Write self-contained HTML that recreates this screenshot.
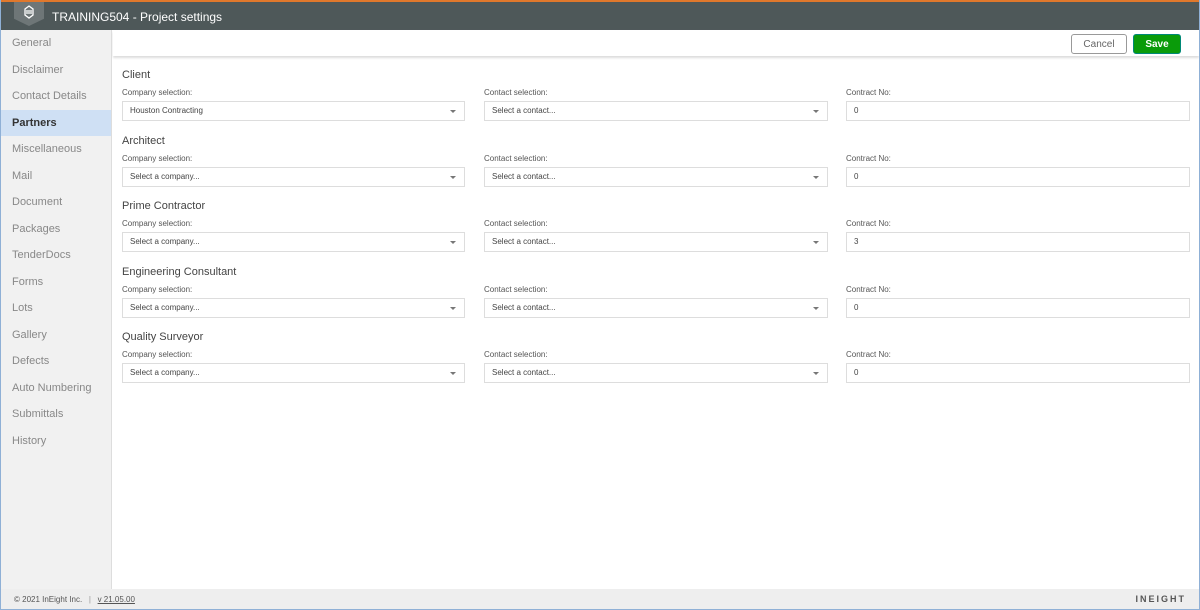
<!DOCTYPE html><html><head><style>
*{box-sizing:border-box;margin:0;padding:0}
body{width:1200px;height:610px;overflow:hidden;font-family:"Liberation Sans",sans-serif;background:#fff;position:relative}
.frame{position:absolute;inset:0;border-right:1px solid #8fb0d6;border-bottom:1px solid #8fb0d6;border-left:1px solid #8fb0d6}
.top{position:absolute;left:0;top:0;width:1200px;height:2px;background:#e0782c}
.hdr{position:absolute;left:0;top:2px;width:1200px;height:28px;background:#4e5859;color:#fff;font-size:12px}
.hdr .t{position:absolute;left:52px;top:8px}
.logo{position:absolute;left:14px;top:0;width:30px;height:24px;background:#6e7677;clip-path:polygon(0 0,100% 0,100% 70%,50% 100%,0 70%)}
.side{position:absolute;left:0;top:30px;width:112px;height:559px;background:#f1f1f1;border-right:1px solid #ddd}
.side div{height:26.5px;line-height:26.5px;padding-left:12px;font-size:11px;color:#888}
.side .on{background:#cfe0f4;color:#333;font-weight:bold}
.bar{position:absolute;left:113px;top:30px;width:1086px;height:26px;background:#fff;box-shadow:0 2px 2px #ddd}
.btn{position:absolute;top:4px;height:20px;font-size:10px;line-height:16px;padding-top:2px;text-align:center;border-radius:3px}
.cancel{left:958px;width:56px;border:1px solid #999;color:#666}
.save{left:1020px;width:48px;background:#0a9b0a;border:1px solid #087;color:#fff;font-weight:bold}
.sec{position:absolute;left:122px;width:1070px}
.sec h{display:block;font-size:11px;color:#444;position:absolute;top:1px}
.lab{position:absolute;top:20px;font-size:8px;color:#555}
.inp{position:absolute;top:33px;height:20px;border:1px solid #ddd;font-size:8px;color:#444;line-height:18px;padding-left:7px}
.inp.s:after{content:"";position:absolute;right:8px;top:8px;border-left:3.5px solid transparent;border-right:3.5px solid transparent;border-top:3.5px solid #777}
.foot{position:absolute;left:0;top:589px;width:1200px;height:21px;background:#eee;font-size:8px;color:#555}
</style></head><body>
<div class="top"></div>
<div class="hdr"><div class="logo"><svg width="30" height="22" viewBox="0 0 30 22"><path d="M11 7 15 4 19 7 19 13 15 16 11 13Z M12 9 18 9 M12 11 18 11" stroke="#fff" stroke-width="1.3" fill="none"/></svg></div><span class="t">TRAINING504 - Project settings</span></div>
<div class="side">
<div>General</div><div>Disclaimer</div><div>Contact Details</div><div class="on">Partners</div><div>Miscellaneous</div><div>Mail</div><div>Document</div><div>Packages</div><div>TenderDocs</div><div>Forms</div><div>Lots</div><div>Gallery</div><div>Defects</div><div>Auto Numbering</div><div>Submittals</div><div>History</div>
</div>
<div class="bar"><div class="btn cancel">Cancel</div><div class="btn save">Save</div></div>

<div class="sec" style="top:68px"><h>Client</h><div class="lab" style="left:0">Company selection:</div><div class="inp s" style="left:0;width:343px">Houston Contracting</div><div class="lab" style="left:362px">Contact selection:</div><div class="inp s" style="left:362px;width:344px">Select a contact...</div><div class="lab" style="left:724px">Contract No:</div><div class="inp" style="left:724px;width:344px">0</div></div>
<div class="sec" style="top:133.5px"><h>Architect</h><div class="lab" style="left:0">Company selection:</div><div class="inp s" style="left:0;width:343px">Select a company...</div><div class="lab" style="left:362px">Contact selection:</div><div class="inp s" style="left:362px;width:344px">Select a contact...</div><div class="lab" style="left:724px">Contract No:</div><div class="inp" style="left:724px;width:344px">0</div></div>
<div class="sec" style="top:199px"><h>Prime Contractor</h><div class="lab" style="left:0">Company selection:</div><div class="inp s" style="left:0;width:343px">Select a company...</div><div class="lab" style="left:362px">Contact selection:</div><div class="inp s" style="left:362px;width:344px">Select a contact...</div><div class="lab" style="left:724px">Contract No:</div><div class="inp" style="left:724px;width:344px">3</div></div>
<div class="sec" style="top:264.5px"><h>Engineering Consultant</h><div class="lab" style="left:0">Company selection:</div><div class="inp s" style="left:0;width:343px">Select a company...</div><div class="lab" style="left:362px">Contact selection:</div><div class="inp s" style="left:362px;width:344px">Select a contact...</div><div class="lab" style="left:724px">Contract No:</div><div class="inp" style="left:724px;width:344px">0</div></div>
<div class="sec" style="top:330px"><h>Quality Surveyor</h><div class="lab" style="left:0">Company selection:</div><div class="inp s" style="left:0;width:343px">Select a company...</div><div class="lab" style="left:362px">Contact selection:</div><div class="inp s" style="left:362px;width:344px">Select a contact...</div><div class="lab" style="left:724px">Contract No:</div><div class="inp" style="left:724px;width:344px">0</div></div>

<div class="foot"><span style="position:absolute;left:14px;top:6px">© 2021 InEight Inc. &nbsp; <span style="color:#999">|</span> &nbsp; <u>v 21.05.00</u></span><span style="position:absolute;right:14px;top:5px;font-weight:bold;letter-spacing:2px;font-size:9px;color:#555">INEIGHT</span></div>
<div class="frame"></div>
</body></html>
